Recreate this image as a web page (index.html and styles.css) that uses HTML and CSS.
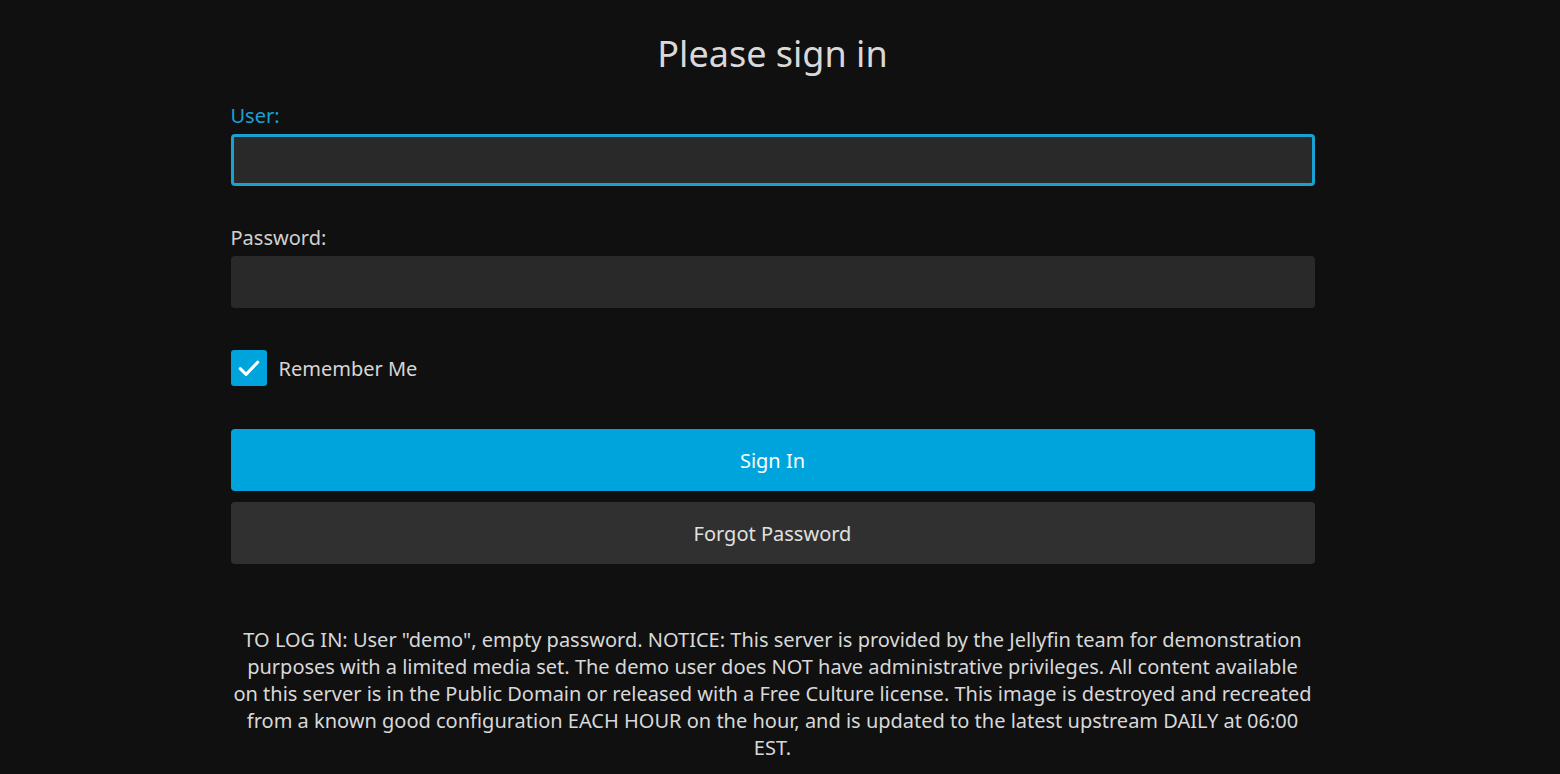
FILE: index.html
```html
<!DOCTYPE html>
<html lang="en">
<head>
<meta charset="utf-8">
<title>Jellyfin</title>
<link rel="stylesheet" href="styles.css">
</head>
<body>
<div class="page">
  <form class="login">
    <h1 class="title">Please sign in</h1>
    <div class="field">
      <label class="label label-focused" for="user">User:</label>
      <input class="input input-focused" id="user" type="text">
    </div>
    <div class="field">
      <label class="label" for="pw">Password:</label>
      <input class="input" id="pw" type="password">
    </div>
    <label class="check">
      <span class="box">
        <svg viewBox="0 0 24 24" width="28" height="28"><path d="M4.5 12.5l5 5L19.5 7" fill="none" stroke="#fff" stroke-width="2.6" stroke-linecap="round" stroke-linejoin="round"/></svg>
      </span>
      <span class="check-text">Remember Me</span>
    </label>
    <button class="btn btn-primary" type="button">Sign In</button>
    <button class="btn btn-secondary" type="button">Forgot Password</button>
    <p class="notice">TO LOG IN: User "demo", empty password. NOTICE: This server is provided by the Jellyfin team for demonstration purposes with a limited media set. The demo user does NOT have administrative privileges. All content available on&nbsp;this server is in the Public Domain or released with a Free Culture license. This image is destroyed and recreated from a known good configuration EACH HOUR on the hour, and is updated to the latest upstream DAILY at 06:00 EST.</p>
  </form>
</div>
</body>
</html>
```
FILE: styles.css
```css
html, body {
  margin: 0;
  padding: 0;
  background: #101010;
  height: 100%;
  overflow: hidden;
}
body {
  font-family: "Noto Sans", "Open Sans", sans-serif;
  color: #dddddd;
}
.page {
  width: 1545px;
  display: flex;
  justify-content: center;
}
.login {
  width: 1084px;
  display: flex;
  flex-direction: column;
}
.title {
  margin: 30px 0 0;
  font-size: 36px;
  font-weight: 400;
  line-height: 48px;
  text-align: center;
  color: #d9d9d9;
}
.field {
  display: flex;
  flex-direction: column;
  margin-top: 24px;
}
.field + .field {
  margin-top: 38px;
}
.label {
  font-size: 20px;
  line-height: 28px;
  color: #d0d0d0;
  margin-bottom: 4px;
}
.label-focused {
  color: #1aa0d2;
}
.input {
  box-sizing: border-box;
  height: 52px;
  background: #292929;
  border: 2px solid #292929;
  border-radius: 4px;
  margin: 0;
  outline: none;
  color: #fff;
  font: inherit;
}
.input-focused {
  border: 3px solid #1aa0d2;
}
.check {
  display: flex;
  align-items: center;
  gap: 12px;
  margin-top: 42px;
}
.box {
  width: 36px;
  height: 36px;
  border-radius: 3px;
  background: #00a4dc;
  display: flex;
  align-items: center;
  justify-content: center;
}
.check-text {
  font-size: 20px;
  line-height: 30px;
  padding-top: 2px;
  color: #d6d6d6;
}
.btn {
  height: 62px;
  border: 0;
  border-radius: 4px;
  font-family: inherit;
  font-size: 20px;
  margin: 0;
  padding: 0;
  text-align: center;
}
.btn-primary {
  margin-top: 43px;
  background: #00a4dc;
  color: #fff;
}
.btn-secondary {
  margin-top: 11px;
  background: #303030;
  color: #e0e0e0;
}
.notice {
  margin: 62px 0 0;
  font-size: 20px;
  line-height: 27px;
  text-align: center;
  color: #d8d8d8;
}
```
